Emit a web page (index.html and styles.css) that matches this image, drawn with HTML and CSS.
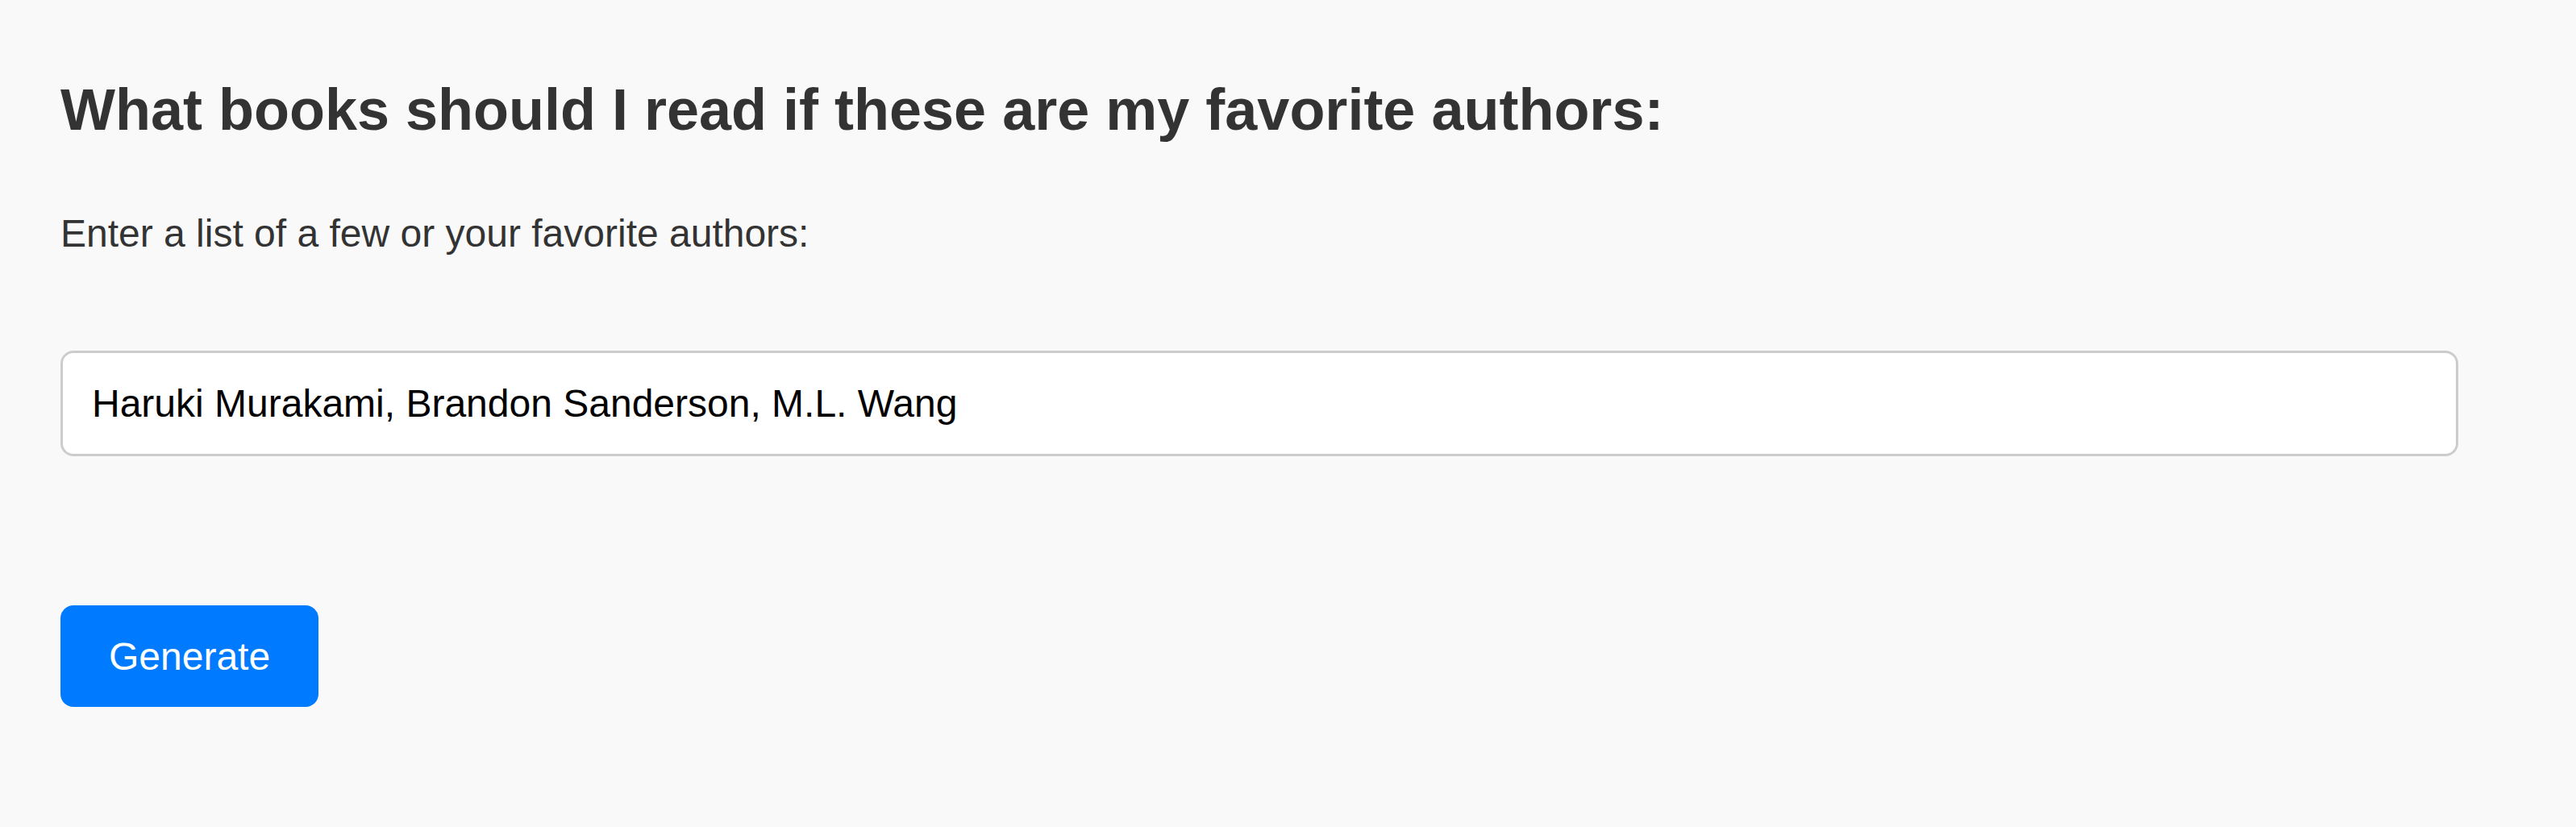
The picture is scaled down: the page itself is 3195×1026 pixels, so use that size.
FILE: index.html
```html
<!DOCTYPE html>
<html lang="en">
<head>
<meta charset="utf-8">
<title>Book recommendations</title>
<link rel="stylesheet" href="styles.css">
</head>
<body>
<main class="page">
  <h1 class="title">What books should I read if these are my favorite authors:</h1>
  <label class="field-label" for="authors">Enter a list of a few or your favorite authors:</label>
  <input class="field-input" id="authors" type="text" value="Haruki Murakami, Brandon Sanderson, M.L. Wang">
  <div class="actions">
    <button class="btn-primary" type="button">Generate</button>
  </div>
</main>
</body>
</html>
```
FILE: styles.css
```css
html, body {
  margin: 0;
  padding: 0;
  background: #f9f9f9;
}
body {
  font-family: "Liberation Sans", Arial, sans-serif;
  color: #333;
  width: 3195px;
  height: 1026px;
  overflow: hidden;
}
.page {
  display: flex;
  flex-direction: column;
  align-items: flex-start;
  padding: 95px 0 0 75px;
}
.title {
  margin: 0 0 85px;
  font-size: 72px;
  font-weight: bold;
  line-height: normal;
  color: #333;
}
.field-label {
  display: block;
  font-size: 48px;
  line-height: normal;
  color: #333;
  margin: 0 0 118px;
}
.field-input {
  box-sizing: border-box;
  width: 2974px;
  height: 131px;
  margin: 0;
  padding: 0 36px;
  border: 3px solid #cccccc;
  border-radius: 16px;
  background: #ffffff;
  font-family: "Liberation Sans", Arial, sans-serif;
  font-size: 48px;
  color: #000;
  outline: none;
}
.actions {
  margin-top: 185px;
}
.btn-primary {
  box-sizing: border-box;
  height: 126px;
  padding: 0 60px;
  margin: 0;
  border: none;
  border-radius: 16px;
  background: #007bff;
  color: #ffffff;
  font-family: "Liberation Sans", Arial, sans-serif;
  font-size: 48px;
  cursor: pointer;
}
```
